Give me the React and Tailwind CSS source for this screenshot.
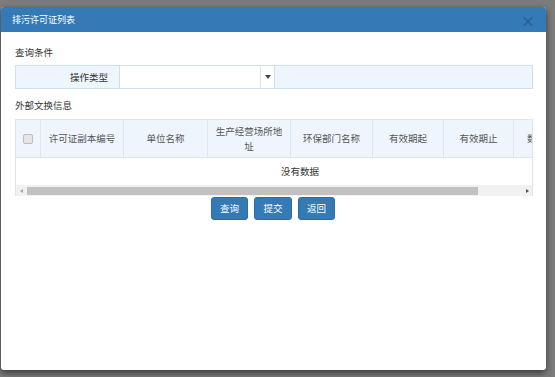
export default function App() {
  return (
    <div
      className="w-[555px] h-[377px] bg-[#7c7c7c] overflow-hidden pt-[7px] pl-[1px]"
      style={{ fontFamily: '"Noto Sans CJK SC", "Noto Sans", sans-serif' }}
    >
      <div className="w-[545px] h-[363px] bg-white rounded-[3px] shadow-[0_3px_7px_rgba(0,0,0,0.55)] flex flex-col">
        <div className="h-[25px] bg-[#337ab7] rounded-t-[3px] flex items-center justify-between pl-[11px] pr-[11px]">
          <span className="text-white text-[9px] leading-none">排污许可证列表</span>
          <span className="text-[#2a5f8e] font-bold text-[14px] leading-none">×</span>
        </div>
        <div className="pl-[14px] pr-[13px] flex flex-col">
          <div className="mt-[13px] h-[14px] text-[9.5px] leading-[14px] text-[#333]">查询条件</div>
          <div className="mt-[6px] h-[24px] flex border border-[#cfe0e6] bg-[#eef6fd]">
            <div className="w-[103px] flex items-center justify-end pr-[11px] text-[9.5px] text-[#333]">操作类型</div>
            <div className="w-[156px] bg-white border-x border-[#cfe0e6] flex">
              <div className="flex-1" />
              <div className="w-[14px] border-l border-[#e3e3e3] flex items-center justify-center">
                <div className="w-0 h-0 border-l-[3px] border-r-[3px] border-t-[4px] border-l-transparent border-r-transparent border-t-[#444]" />
              </div>
            </div>
            <div className="flex-1" />
          </div>
          <div className="mt-[9px] h-[14px] text-[9.5px] leading-[14px] text-[#333]">外部文换信息</div>
          <div className="mt-[7px] w-[518px] overflow-hidden border-l border-r border-[#dde6ee]">
            <div className="flex h-[39px] bg-[#eef5fc] border-t border-b border-[#dde6ee] text-[9.5px] text-[#555] w-[700px]">
              <div className="w-[25px] shrink-0 border-r border-[#dde6ee] flex items-center justify-center">
                <div className="w-[10px] h-[10px] rounded-[2px] bg-[#e6e6e6] border border-[#bdbdbd]" />
              </div>
              <div className="w-[83px] shrink-0 border-r border-[#dde6ee] flex items-center justify-center">许可证副本编号</div>
              <div className="w-[84px] shrink-0 border-r border-[#dde6ee] flex items-center justify-center">单位名称</div>
              <div className="w-[83px] shrink-0 border-r border-[#dde6ee] flex flex-col items-center justify-center leading-[15px]">
                <span>生产经营场所地</span>
                <span>址</span>
              </div>
              <div className="w-[82px] shrink-0 border-r border-[#dde6ee] flex items-center justify-center">环保部门名称</div>
              <div className="w-[71px] shrink-0 border-r border-[#dde6ee] flex items-center justify-center">有效期起</div>
              <div className="w-[70px] shrink-0 border-r border-[#dde6ee] flex items-center justify-center">有效期止</div>
              <div className="w-[60px] shrink-0 flex items-center pl-[13px]">数据来源</div>
            </div>
            <div className="h-[27px] flex items-center pl-[265px] text-[9.5px] text-[#333]">没有数据</div>
            <div className="h-[11px] bg-[#f1f1f1] flex items-center">
              <div className="w-[11px] flex items-center justify-center">
                <div className="w-0 h-0 border-t-[2.5px] border-b-[2.5px] border-r-[3px] border-t-transparent border-b-transparent border-r-[#a3a3a3]" />
              </div>
              <div className="w-[451px] h-[8px] bg-[#c1c1c1]" />
              <div className="flex-1" />
              <div className="w-[10px] flex items-center justify-center">
                <div className="w-0 h-0 border-t-[2.5px] border-b-[2.5px] border-l-[3px] border-t-transparent border-b-transparent border-l-[#505050]" />
              </div>
            </div>
          </div>
          <div className="mt-[1px] flex justify-center gap-[6px] pr-[2px]">
            <button className="w-[37px] h-[23px] bg-[#337ab7] border border-[#2e6da4] rounded-[3px] text-white text-[9.5px] leading-none">查询</button>
            <button className="w-[38px] h-[23px] bg-[#337ab7] border border-[#2e6da4] rounded-[3px] text-white text-[9.5px] leading-none">提交</button>
            <button className="w-[37px] h-[23px] bg-[#337ab7] border border-[#2e6da4] rounded-[3px] text-white text-[9.5px] leading-none">返回</button>
          </div>
        </div>
      </div>
    </div>
  );
}
